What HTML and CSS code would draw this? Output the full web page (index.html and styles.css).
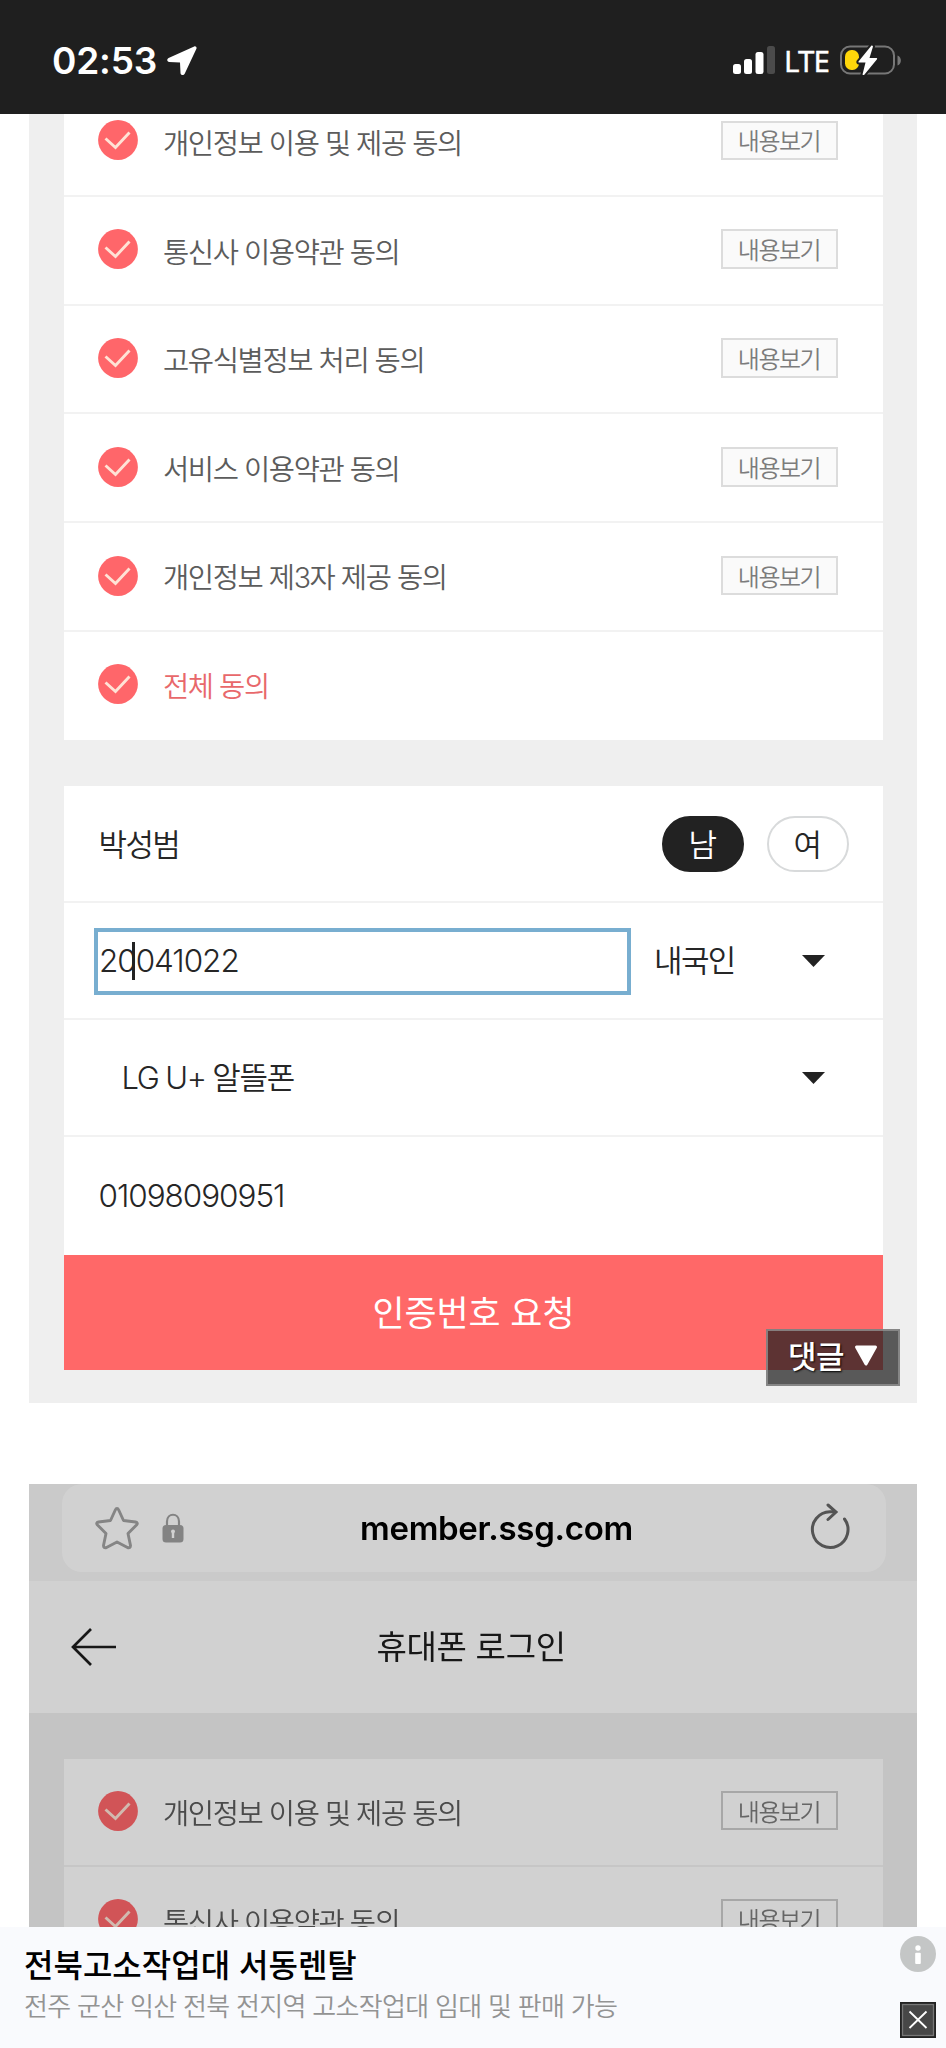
FILE: index.html
```html
<!DOCTYPE html>
<html lang="ko">
<head>
<meta charset="utf-8">
<title>휴대폰 로그인</title>
<link rel="stylesheet" href="styles.css">
</head>
<body>
<svg class="defs" aria-hidden="true">
  <symbol id="check" viewBox="0 0 40 40"><circle cx="20" cy="20" r="19.9" fill="#ff666a"/><path d="M7.5 18.5 17.5 27.5 31.5 12.5" fill="none" stroke="#ffe3d6" stroke-width="2.9"/></symbol>
  <symbol id="caret" viewBox="0 0 23 12"><path d="M0 0H23L11.5 12Z" fill="#222"/></symbol>
</svg>

<header class="status">
  <span class="time">02:53</span>
  <svg class="location" viewBox="0 0 30 30"><path d="M27.2.4 1.6 12.1C-.6 13.2.1 16 2.2 16.1L13 16.6 13.5 27C13.6 29.4 16.6 29.9 17.7 27.8L29.4 2.8C30 1.2 28.8-.2 27.2.4Z" fill="#fff"/></svg>
  <svg class="signal" viewBox="0 0 42 28"><g fill="#fff"><rect y="18" width="8" height="10" rx="2.5"/><rect x="11" y="13" width="8" height="15" rx="2.5"/><rect x="22.500" y="6" width="8" height="22" rx="2.500"/></g><rect x="34" width="8" height="28" rx="2.5" fill="#4b4b4b"/></svg>
  <span class="network">LTE</span>
  <svg class="battery" viewBox="0 0 62 32"><rect x="1" y="2.500" width="53" height="27" rx="9" fill="none" stroke="#777" stroke-width="2"/><path d="M57.500 11.500C62 13 62 20 57.500 21.500Z" fill="#777"/><rect x="5" y="6" width="14" height="20" rx="6.500" fill="#ffd60a"/><path d="M31.500 1.500 18.500 17.500Q18 18.500 19 18.500H25.500L22.500 30.500Q23.500 31.500 24.500 30.500L37 15.200Q37.500 14 36.500 14H29.500L33 2.500Q32.500 1 31.500 1.500Z" fill="#fff" stroke="#1f1f1f" stroke-width="4" paint-order="stroke"/></svg>
</header>

<main class="feed">
  <section class="shot shot-form">
    <ul class="card terms">
      <li class="term"><svg class="check"><use href="#check"/></svg><span class="label">개인정보 이용 및 제공 동의</span><button class="view">내용보기</button></li>
      <li class="term"><svg class="check"><use href="#check"/></svg><span class="label">통신사 이용약관 동의</span><button class="view">내용보기</button></li>
      <li class="term"><svg class="check"><use href="#check"/></svg><span class="label">고유식별정보 처리 동의</span><button class="view">내용보기</button></li>
      <li class="term"><svg class="check"><use href="#check"/></svg><span class="label">서비스 이용약관 동의</span><button class="view">내용보기</button></li>
      <li class="term"><svg class="check"><use href="#check"/></svg><span class="label">개인정보 제<span class="num">3</span>자 제공 동의</span><button class="view">내용보기</button></li>
      <li class="term all"><svg class="check"><use href="#check"/></svg><span class="label">전체 동의</span></li>
    </ul>
    <div class="card form">
      <div class="field name"><span class="value">박성범</span><span class="pill on">남</span><span class="pill">여</span></div>
      <div class="field birth"><div class="input"><span class="digits">20<i class="cursor"></i>041022</span></div><span class="nation">내국인</span><svg class="caret"><use href="#caret"/></svg></div>
      <div class="field carrier"><span class="value">LG U+ 알뜰폰</span><svg class="caret"><use href="#caret"/></svg></div>
      <div class="field phone"><span class="digits">01098090951</span></div>
      <button class="submit">인증번호 요청</button>
    </div>
    <div class="comments"><span>댓글</span><svg class="down" viewBox="0 0 24 22"><path d="M2.500 2H21.500L12 19Z" fill="#fff" stroke="#fff" stroke-width="3" stroke-linejoin="round"/></svg></div>
  </section>

  <section class="shot shot-dim">
    <div class="browser">
      <div class="address">
        <svg class="star" viewBox="0 0 46 46"><path d="M23 3.500Q24 3.500 24.700 5L29.500 15.500 41.500 17Q44.500 17.800 42.500 20L34 28.500 36.500 40.500Q36.500 43.500 33.500 42.500L23 37 12.500 42.500Q9.500 43.500 9.500 40.500L12 28.500 3.500 20Q1.500 17.800 4.500 17L16.500 15.500 21.300 5Q22 3.500 23 3.500Z" fill="none" stroke="#a2a2a2" stroke-width="2.900" stroke-linejoin="round"/></svg>
        <svg class="lock" viewBox="0 0 22 30"><path d="M5 13V8.500C5 -.5 17 -.5 17 8.500V13" fill="none" stroke="#a0a0a0" stroke-width="2.200"/><rect x=".5" y="12" width="21" height="17.500" rx="3.500" fill="#a0a0a0"/><path d="M9 18.500A2 2 0 0 1 13 18.500L12.200 20.500V25H9.800V20.500Z" fill="#fff"/></svg>
        <span class="url">member.ssg.com</span>
        <svg class="reload" viewBox="0 0 40 46"><path d="M34.500 16A17.800 17.800 0 1 1 20 8.800H25" fill="none" stroke="#666" stroke-width="3" stroke-linecap="round"/><path d="M18 2 26 9 18 16.500" fill="none" stroke="#666" stroke-width="3" stroke-linecap="round"/></svg>
      </div>
    </div>
    <div class="titlebar">
      <svg class="back" viewBox="0 0 46 38"><path d="M45 19H2M20 1 2 19 20 37" fill="none" stroke="#1c1c1c" stroke-width="2.700"/></svg>
      <span class="title">휴대폰 로그인</span>
    </div>
    <ul class="card terms">
      <li class="term"><svg class="check"><use href="#check"/></svg><span class="label">개인정보 이용 및 제공 동의</span><button class="view">내용보기</button></li>
      <li class="term"><svg class="check"><use href="#check"/></svg><span class="label">통신사 이용약관 동의</span><button class="view">내용보기</button></li>
    </ul>
  </section>
</main>

<footer class="ad">
  <div class="copy"><strong class="headline">전북고소작업대 서동렌탈</strong><span class="sub">전주 군산 익산 전북 전지역 고소작업대 임대 및 판매 가능</span></div>
  <div class="controls">
    <svg class="info" viewBox="0 0 36 36"><circle cx="18" cy="18" r="18" fill="#c4c6c6"/><circle cx="18" cy="12" r="2.700" fill="#fff"/><rect x="15.200" y="16.800" width="5.600" height="11.200" rx="1" fill="#fff"/></svg>
    <svg class="close" viewBox="0 0 36 36"><rect width="36" height="36" fill="#222"/><rect x="2.500" y="2.500" width="31" height="31" fill="#474747" stroke="#777" stroke-width="1.300"/><path d="M9.500 9.500 26.500 26M26.500 9.500 9.500 26" stroke="#fff" stroke-width="1.800"/></svg>
  </div>
</footer>
</body>
</html>
```
FILE: styles.css
```css
* { box-sizing: border-box; }
body {
  margin: 0;
  width: 946px;
  height: 2048px;
  display: flex;
  flex-direction: column;
  overflow: hidden;
  background: #fff;
  font-family: "Noto Sans CJK KR", sans-serif;
}
ul { list-style: none; padding: 0; margin: 0; }
button { font: inherit; border: 0; padding: 0; }
svg { display: block; flex: none; }
.defs { position: absolute; width: 0; height: 0; }

.status {
  height: 114px;
  flex: none;
  display: flex;
  align-items: center;
  padding: 7px 44px 0 52px;
  background: #1f1f1f;
  color: #fff;
}
.time { width: 115px; font: 600 37px/40px Inter, sans-serif; letter-spacing: -0.2px; white-space: nowrap; }
.location { width: 30px; height: 30px; }
.signal { width: 42px; height: 28px; margin-left: auto; margin-bottom: 1px; }
.network { width: 56px; margin-left: 9px; font: 400 29.500px/40px "Noto Sans", sans-serif; letter-spacing: -0.900px; -webkit-text-stroke: .4px #fff; }
.battery { width: 62px; height: 32px; margin-bottom: 1px; }

.feed { flex: 1; min-height: 0; overflow: hidden; padding: 0 29px; }
.shot { background: #efefef; padding: 0 34px 0 35px; }
.card { background: #fff; }
.shot-form { position: relative; display: flex; flex-direction: column; height: 1289px; }

.term {
  height: 108.800px;
  display: flex;
  align-items: center;
  padding: 0 45.500px 2px 34px;
  border-bottom: 2px solid #f2f2f2;
}
.shot-form .term:first-child { height: 82.800px; }
.shot-form .term:first-child > * { margin-top: -26px; }
.term.all { height: 107.600px; border-bottom-color: #fff; }
.check { width: 40px; height: 40px; }
.label {
  margin-left: 25px;
  padding-top: 3px;
  font-size: 28.500px;
  line-height: 40px;
  letter-spacing: -1.350px;
  word-spacing: -0.300px;
  font-weight: 350;
  color: #5c5c5c;
  white-space: nowrap;
}
.num { font-family: Inter, sans-serif; font-weight: 350; }
.all .label { color: #e8686b; }
.view {
  width: 117px;
  height: 39.500px;
  margin-left: auto;
  border: 2px solid #dcdcdc;
  background: #fafafa;
  color: #7c7c7c;
  font-size: 24px;
  line-height: 34px;
  font-weight: 350;
  letter-spacing: -1.500px;
}

.form { margin-top: 46px; }
.field {
  height: 117.300px;
  display: flex;
  align-items: center;
  padding: 0 34px 0 34.500px;
  border-bottom: 2px solid #f2f2f2;
  font-size: 31px;
  line-height: 44px;
  letter-spacing: -1.600px;
  font-weight: 350;
  color: #262626;
}
.name .value { margin-right: auto; }
.name { padding-top: 2px; }
.name .value { margin-top: -3px; }
.pill {
  width: 82.500px;
  height: 56.500px;
  margin-left: 22.500px;
  border: 2px solid #d8dadb;
  border-radius: 29px;
  text-align: center;
  line-height: 49px;
  letter-spacing: 0;
}
.pill.on { background: #222; border-color: #222; color: #fff; }
.birth { padding-left: 30px; padding-top: 1px; }
.input { width: 537px; height: 67px; border: 4px solid #78aed0; padding: 0 0 0 1px; display: flex; align-items: center; }
.digits { font: 350 31.500px/40px Inter, sans-serif; letter-spacing: -1.050px; position: relative; }
.cursor { position: absolute; left: 33px; top: 1px; width: 3px; height: 38px; background: #222; }
.nation { margin-left: 23px; margin-top: -4px; }
.caret { width: 23px; height: 12px; margin-left: auto; margin-right: 24.500px; }
.carrier .value { margin-left: 23px; padding-top: 1px; font-family: Inter, "Noto Sans CJK KR", sans-serif; letter-spacing: -1.250px; word-spacing: -1px; }
.phone { border: 0; }
.submit {
  display: block;
  width: 100%;
  height: 115.500px;
  background: #ff6868;
  color: #fff;
  font-size: 34.800px;
  padding-bottom: 4px;
}
.comments {
  position: absolute;
  right: 17px;
  bottom: 17.500px;
  width: 134px;
  height: 57px;
  display: flex;
  align-items: center;
  gap: 10px;
  padding: 0 0 2px 20px;
  border: 2px solid rgba(145,145,145,.8);
  background: rgba(31,31,31,.720);
  color: #fff;
  font-size: 31px;
  line-height: 50px;
  font-weight: 500;
  letter-spacing: -0.500px;
  text-shadow: 1px 1px 2px #000;
}
.comments span { margin-top: -2px; }
.down { width: 24px; height: 22px; }

.shot-dim { margin-top: 80.500px; filter: brightness(.82); height: 460px; }
.browser { height: 97.500px; margin: 0 -34px 0 -35px; padding: 0 31.500px 9.500px 33px; background: #f6f6f6; }
.address { height: 88px; display: flex; align-items: center; border-radius: 20px; background: #fff; padding: 0 36px 0 32px; }
.star { width: 46px; height: 46px; }
.lock { width: 22px; height: 30px; margin-left: 22px; }
.url { width: 275px; margin-left: 176px; font: 600 33px/44px Inter, sans-serif; letter-spacing: -0.300px; color: #000; }
.reload { width: 40px; height: 46px; margin-left: auto; margin-bottom: 3px; }
.titlebar { height: 132px; margin: 0 -34px 0 -35px; padding: 0 0 1px 42px; display: flex; align-items: center; background: #fff; }
.back { width: 46px; height: 38px; }
.title { margin-left: 259.500px; padding-bottom: 4px; font-size: 33px; line-height: 48px; color: #1c1c1c; letter-spacing: -0.300px; }
.shot-dim .terms { margin-top: 45.500px; }
.shot-dim .term:first-child { height: 108.200px; }
.shot-dim .view { background: #fff; border-color: #ccc; }

.ad { flex: none; height: 121px; background: #f9fafd; display: flex; justify-content: space-between; padding: 9px 10px 0 24px; }
.copy { display: flex; flex-direction: column; padding-top: 5px; }
.headline { font-size: 32px; line-height: 44px; font-weight: 500; color: #000; }
.sub { margin-top: 1px; font-size: 26px; line-height: 38px; font-weight: 350; letter-spacing: -0.700px; color: #939393; white-space: nowrap; }
.controls { display: flex; flex-direction: column; gap: 30px; }
.info, .close { width: 36px; height: 36px; }
```
